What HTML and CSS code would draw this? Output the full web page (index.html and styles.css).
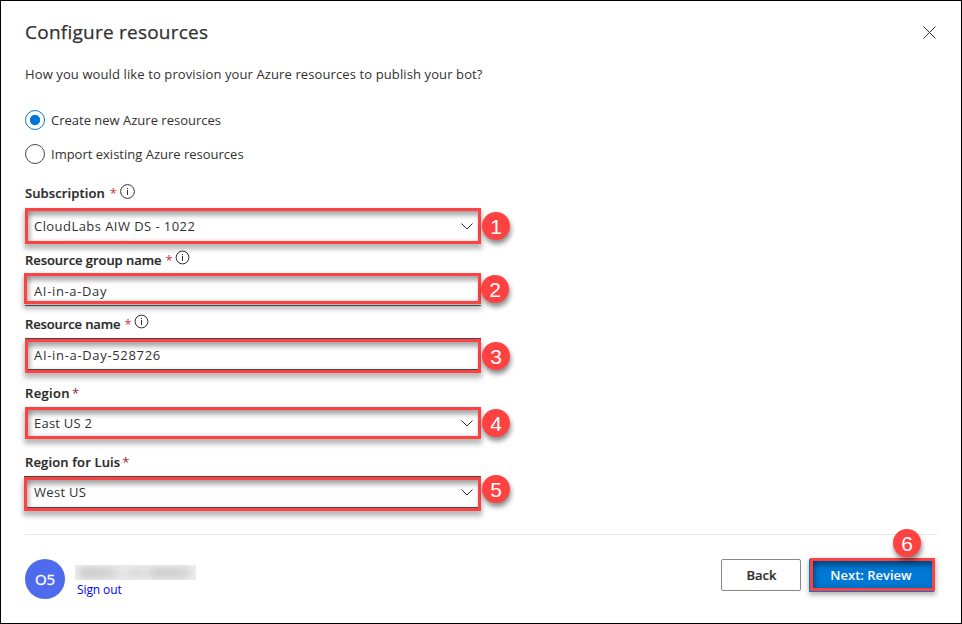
FILE: index.html
```html
<!DOCTYPE html>
<html lang="en">
<head>
<meta charset="utf-8">
<title>Configure resources</title>
<link rel="stylesheet" href="styles.css">
</head>
<body>
<main class="dialog">
  <header class="header">
    <h1>Configure resources</h1>
    <svg class="close" viewBox="0 0 13 13"><path d="M.5.5l12 12M12.5.5l-12 12"/></svg>
  </header>
  <p class="intro">How you would like to provision your Azure resources to publish your bot?</p>
  <div class="radio"><span class="dot checked"></span><span class="t-create">Create new Azure resources</span></div>
  <div class="radio"><span class="dot"></span><span class="t-import">Import existing Azure resources</span></div>

  <form class="form">
    <section class="field f1">
      <div class="label"><b class="l1">Subscription</b><i class="star">*</i><svg class="info" viewBox="0 0 15 15"><circle cx="7.5" cy="7.5" r="6.9"/><path d="M7.5 6v5M7.5 4v1.2"/></svg></div>
      <div class="box"><span class="v1">CloudLabs AIW DS - 1022</span><svg class="chev" viewBox="0 0 12 7"><path d="M.5.5L6 6 11.5.5"/></svg><em class="badge">1</em></div>
    </section>
    <section class="field f2">
      <div class="label"><b class="l2">Resource group name</b><i class="star">*</i><svg class="info" viewBox="0 0 15 15"><circle cx="7.5" cy="7.5" r="6.4"/><path d="M7.5 6v5M7.5 4v1.2"/></svg></div>
      <div class="box"><span class="v2">AI-in-a-Day</span><em class="badge">2</em></div>
    </section>
    <section class="field f3">
      <div class="label"><b class="l3">Resource name</b><i class="star">*</i><svg class="info" viewBox="0 0 15 15"><circle cx="7.5" cy="7.5" r="6.4"/><path d="M7.5 6v5M7.5 4v1.2"/></svg></div>
      <div class="box"><span class="v3">AI-in-a-Day-528726</span><em class="badge">3</em></div>
    </section>
    <section class="field f4">
      <div class="label"><b class="l4">Region</b><i class="star dark">*</i></div>
      <div class="box"><span class="v4">East US 2</span><svg class="chev" viewBox="0 0 12 7"><path d="M.5.5L6 6 11.5.5"/></svg><em class="badge">4</em></div>
    </section>
    <section class="field f5">
      <div class="label"><b class="l5">Region for Luis</b><i class="star dark">*</i></div>
      <div class="box"><span class="v5">West US</span><svg class="chev" viewBox="0 0 12 7"><path d="M.5.5L6 6 11.5.5"/></svg><em class="badge">5</em></div>
    </section>
  </form>

  <footer class="footer">
    <div class="avatar">O5</div>
    <div class="user"><div class="redacted"><div class="smudge"></div></div><a>Sign out</a></div>
    <div class="back"><span class="t-back">Back</span></div>
    <div class="next"><span class="t-next">Next: Review</span><em class="badge">6</em></div>
  </footer>
</main>
</body>
</html>
```
FILE: styles.css
```css
* { box-sizing: border-box; }
body { margin: 0; background: #fff; }
.dialog {
  --glow: 0 4px 5px 1px rgba(0,0,0,.28), inset 0 6px 4px -1px rgba(0,0,0,.28), inset 3px 0 4px rgba(0,0,0,.2);
  width: 962px; height: 624px; overflow: hidden;
  border: 1px solid #000;
  padding: 0 24px;
  font: 13px/20px "Open Sans", "Noto Sans", sans-serif;
  color: #323130;
}
.dialog span, .dialog b, .dialog a, h1, .intro { white-space: nowrap; }
.header { display: flex; justify-content: space-between; padding-top: 17px; height: 63px; }
h1 { margin: 0; font-size: 19px; line-height: 28px; font-weight: 400; letter-spacing: .24px; -webkit-text-stroke: .25px #323130; }
.close { width: 13px; height: 13px; margin: 8px 1px 0 0; }
svg { fill: none; stroke: #323130; stroke-width: 1; flex: none; }
.intro { margin: 0 0 25px; letter-spacing: .11px; }
.radio { display: flex; align-items: center; height: 22px; margin-bottom: 12px; gap: 6px; }
.dot { width: 20px; height: 20px; border: 1px solid #484644; border-radius: 50%; flex: none; }
.dot.checked { border-color: #0078d4; background: radial-gradient(circle, #0078d4 0 4.8px, transparent 5.4px); }

.form { width: 456px; height: 357px; }
.field { display: flex; flex-direction: column; }
.label { display: flex; height: 22px; line-height: 22px; }
.label b { font-weight: 600; color: #2b2a29; -webkit-text-stroke: .2px #2b2a29; }
.star { font-style: normal; color: #d13438; margin-left: 5px; }
.star.dark { color: #a4262c; margin-left: 2px; }
.info { width: 15px; height: 15px; margin: 1px 0 0 2px; }
.l1 { letter-spacing: .1px; }
.l2 { letter-spacing: -.05px; }
.l3 { letter-spacing: -.12px; }
.f2 .star, .f3 .star { margin-left: 4px; }
.l4 { letter-spacing: .35px; }
.l5 { letter-spacing: .15px; }
.v1 { letter-spacing: .44px; }
.v2 { letter-spacing: .64px; }
.v3 { letter-spacing: .67px; }
.v4 { letter-spacing: .22px; }
.v5 { letter-spacing: .3px; }
.box {
  position: relative; display: flex; align-items: center; justify-content: space-between;
  border: 3px solid #fe4141; padding: 0 5px 0 6px;
  box-shadow: var(--glow);
}
.chev { width: 12px; height: 7px; }
.f1 { padding-top: 5px; }
.f1 .info { margin: 2px 0 0 3px; }
.f1 .box { height: 36px; margin-top: 4px; }
.f2 { padding-top: 5px; }
.f2 .box { height: 31px; margin: 2px 0 0 -1px; padding-left: 7px; }
.f2 .box::after { content: ""; position: absolute; left: -2px; right: -3px; bottom: -5px; height: 1px; background: #484644; }
.f2 .box > span { padding-top: 5px; }
.f3 { padding-top: 9px; }
.f3 .box { height: 34px; margin-top: 4px; padding-bottom: 2px; }
.f3 .box, .f5 .box { box-shadow: 0 -1px 0 #484644, inset 0 -1px 0 #484644, var(--glow); }
.f4 { padding-top: 9px; }
.f4 .box { height: 32px; margin-top: 3px; }
.f5 { padding-top: 12px; }
.f5 .box { height: 34px; margin: 4px 0 0 -1px; padding: 0 5px 4px 7px; }
.badge {
  position: absolute; right: -32px; top: 0; width: 28px; height: 28px; border-radius: 50%;
  background: #fe4141; color: #fff; text-align: center;
  font: normal 21px/29px "Liberation Sans", Arial, sans-serif;
  box-shadow: 1px 4px 5px rgba(0,0,0,.45);
}
.f1 .badge { top: 1px; }
.f2 .badge { top: -1px; right: -31px; }
.f4 .badge { top: -1px; }
.f5 .badge { top: -5px; }

.footer { display: flex; align-items: flex-start; border-top: 1px solid #e6e6e6; padding-top: 24px; width: 912px; }
.avatar { width: 40px; height: 40px; border-radius: 50%; background: #4f6bed; color: #fff; text-align: center; font-size: 15px; line-height: 41px; -webkit-text-stroke: .3px #fff; }
.user { width: 121px; margin: 6px 0 0 10px; }
.redacted { height: 15px; background: #efefef; overflow: hidden; }
.smudge { height: 10px; width: 112px; margin: 3px 0 0 4px; background: linear-gradient(90deg, #c4c4c4 0 10%, #cacaca 28%, #e2e2e2 36% 44%, #cecece 52%, #e4e4e4 59%, #c6c6c6 68% 84%, #d4d4d4); filter: blur(4px); }
.user a { display: block; color: #0000ee; font-size: 12px; line-height: 20px; margin-left: 2px; letter-spacing: -.1px; }
.back { width: 80px; height: 32px; margin-left: 525px; border: 1px solid #8a8886; border-radius: 2px; text-align: center; font-weight: 600; line-height: 31px; -webkit-text-stroke: .2px #323130; }
.t-back { margin-left: 1px; }
.next { position: relative; width: 125px; height: 33px; margin: -1px 0 0 9px; border: 3px solid #fe4141; background: #0078d4; color: #fff; text-align: center; font-weight: 600; line-height: 28px; box-shadow: -1px 1px 0 0 #0078d4, 0 3px 5px 1px rgba(0,0,0,.3), inset 0 6px 4px -1px rgba(0,0,0,.3), inset 3px 0 4px rgba(0,0,0,.25); }
.t-next { margin-right: 3px; }
.next .badge { right: 11px; top: -32px; }
```
